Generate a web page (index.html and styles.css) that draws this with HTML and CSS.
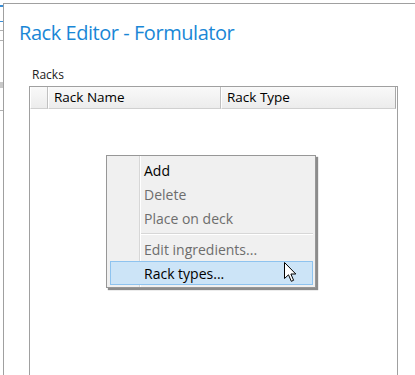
FILE: index.html
```html
<!DOCTYPE html>
<html>
<head>
<meta charset="utf-8">
<link rel="stylesheet" href="styles.css">
</head>
<body>
<div class="desk">
  <div class="bgwin">
    <div class="mark blue m1"></div>
    <div class="mark blue m2"></div>
    <div class="mark gray m3"></div>
    <div class="mark gray m4"></div>
    <div class="mark block m5"></div>
    <div class="mark gray m6"></div>
  </div>
  <div class="window">
    <h1 class="title">Rack Editor - Formulator</h1>
    <div class="label">Racks</div>
    <div class="grid">
      <div class="header">
        <div class="hcell rowhead"></div>
        <div class="hcell col1">Rack Name</div>
        <div class="hcell col2">Rack Type</div>
        <div class="hcell rest"></div>
      </div>
    </div>
  </div>
</div>

<div class="menu">
  <div class="item">Add</div>
  <div class="item disabled">Delete</div>
  <div class="item disabled">Place on deck</div>
  <div class="sep"></div>
  <div class="item disabled">Edit ingredients...</div>
  <div class="item hover">Rack types...</div>
</div>

<svg class="cursor" width="14" height="21" viewBox="0 0 14 21">
  <path d="M0.5,0.5 L0.5,16.5 L4.5,12.8 L7.3,19.3 L9.6,18.3 L6.9,12 L11.8,12 Z" fill="#fff" stroke="#000" stroke-width="1" stroke-linejoin="miter"/>
</svg>
</body>
</html>
```
FILE: styles.css
```css
html, body {
  margin: 0;
  padding: 0;
  background: #fff;
}
body {
  width: 415px;
  height: 375px;
  overflow: hidden;
  position: relative;
  font-family: "Open Sans", "Noto Sans", sans-serif;
}
.desk {
  display: flex;
  height: 375px;
}
.bgwin {
  width: 3px;
  flex: none;
  display: flex;
  flex-direction: column;
}
.mark { width: 3px; height: 1px; }
.mark.blue { background: #3a8fd8; }
.mark.gray { background: #b0b0b0; }
.mark.block { background: #c8c8c8; height: 6px; }
.m1 { margin-top: 5px; height: 2px; }
.m2 { margin-top: 14px; }
.m3 { margin-top: 8px; }
.m4 { margin-top: 9px; }
.m5 { margin-top: 41px; }
.m6 { margin-top: 22px; }

.window {
  flex: 1;
  margin-top: 3px;
  border-left: 1px solid #a0a0a0;
  border-top: 1px solid #a0a0a0;
  padding: 0 0 0 25px;
}
.title {
  margin: 16px 0 0 -10px;
  font-size: 20px;
  font-weight: 400;
  color: #1a87d6;
  line-height: 26px;
  letter-spacing: -0.45px;
}
.label {
  margin: 21px 0 0 3px;
  font-size: 12px;
  line-height: 16px;
  color: #222;
}
.grid {
  margin-top: 3px;
  width: 367px;
  height: 300px;
  border: 1px solid #a0a0a0;
  border-bottom: none;
}
.header {
  display: flex;
  height: 22px;
}
.hcell {
  box-sizing: border-box;
  height: 22px;
  background: linear-gradient(#f9f9f9, #ececec);
  border-left: 1px solid #ffffff;
  border-right: 1px solid #c0c0c0;
  border-bottom: 1px solid #d0d0d0;
  font-size: 13.5px;
  line-height: 21px;
  color: #000;
  padding-left: 5px;
  white-space: nowrap;
}
.rowhead { width: 18px; padding: 0; }
.col1 { width: 173px; }
.col2 { width: 175px; border-right: 1px solid #a8a8a8; }
.rest { flex: 1; padding: 0; border: none; background: #fff; }

.menu {
  position: absolute;
  left: 106px;
  top: 155px;
  width: 208px;
  box-sizing: content-box;
  padding: 2px 0;
  border: 1px solid #979797;
  background: #f0f0f0 linear-gradient(90deg, transparent 32px, #d7d7d7 32px, #d7d7d7 33px, #fff 33px, #fff 34px, transparent 34px);
  box-shadow: 2px 2px 1px rgba(0,0,0,0.45);
  font-size: 14px;
}
.item {
  height: 24px;
  line-height: 23px;
  padding-left: 33px;
  color: #000;
  box-sizing: border-box;
  margin: 0 2px 0 3px;
  border: 1px solid transparent;
}
.item.disabled { color: #6d6d6d; }
.item.hover {
  background: #cce4f7;
  border-color: #8ec3ef;
}
.sep {
  height: 7px;
  margin-left: 34px;
  margin-right: 2px;
  background: linear-gradient(transparent 3px, #d7d7d7 3px, #d7d7d7 4px, #fff 4px, #fff 5px, transparent 5px);
}
.cursor {
  position: absolute;
  left: 284px;
  top: 262px;
}
```
